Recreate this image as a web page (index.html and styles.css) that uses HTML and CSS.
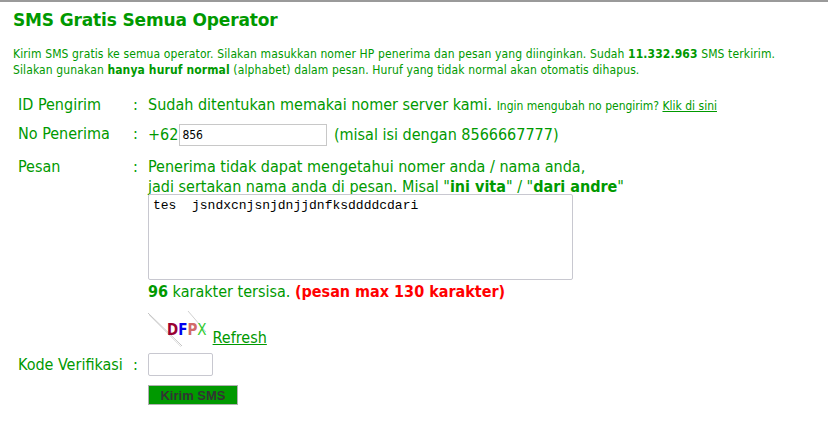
FILE: index.html
```html
<!DOCTYPE html>
<html lang="id">
  <head>
    <meta charset="utf-8" />
    <title>SMS Gratis Semua Operator</title>
    <link rel="stylesheet" href="styles.css">
  </head>
  <body>
    <div class="page">
      <h1 class="title">SMS Gratis Semua Operator</h1>
      <p class="intro">
        Kirim SMS gratis ke semua operator. Silakan masukkan nomer HP penerima dan pesan yang diinginkan. Sudah <b>11.332.963</b> SMS terkirim.<br />
        Silakan gunakan <b>hanya huruf normal</b> (alphabet) dalam pesan. Huruf yang tidak normal akan otomatis dihapus.
      </p>
      <form class="sms-form" onsubmit="return false">
        <table class="form-table">
          <tr class="row-id">
            <td class="label">ID Pengirim</td>
            <td class="colon">:</td>
            <td class="value">Sudah ditentukan memakai nomer server kami. <span class="small">Ingin mengubah no pengirim? <a href="#">Klik di sini</a></span></td>
          </tr>
          <tr class="row-no">
            <td class="label">No Penerima</td>
            <td class="colon">:</td>
            <td class="value">+62<input class="phone" type="text" value="856" /> (misal isi dengan 8566667777)</td>
          </tr>
          <tr class="row-pesan">
            <td class="label">Pesan</td>
            <td class="colon">:</td>
            <td class="value">
              Penerima tidak dapat mengetahui nomer anda / nama anda,<br />
              jadi sertakan nama anda di pesan. Misal "<b>ini vita</b>" / "<b>dari andre</b>"<br />
              <textarea class="message">tes  jsndxcnjsnjdnjjdnfksddddcdari</textarea><br />
              <b>96</b> karakter tersisa. <b class="warn">(pesan max 130 karakter)</b>
            </td>
          </tr>
          <tr class="row-captcha">
            <td></td>
            <td></td>
            <td class="value">
              <span class="captcha">
                <svg class="captcha-noise" width="60" height="36" viewBox="0 0 60 36">
                  <line x1="0" y1="2" x2="34" y2="35" stroke="#c4c4c4" stroke-width="1" />
                  <line x1="1" y1="4" x2="33" y2="36" stroke="#e4e4e4" stroke-width="1" />
                  <line x1="40" y1="0" x2="58" y2="21" stroke="#d0d0d0" stroke-width="1" />
                </svg>
                <span class="letters"><span class="c1">D</span><span class="c2">F</span><span class="c3">P</span><span class="c4">X</span></span>
              </span>
              <a class="refresh" href="#">Refresh</a>
            </td>
          </tr>
          <tr class="row-kode">
            <td class="label">Kode Verifikasi</td>
            <td class="colon">:</td>
            <td class="value"><input class="kode" type="text" /></td>
          </tr>
          <tr class="row-submit">
            <td></td>
            <td></td>
            <td class="value"><button class="submit" type="submit">Kirim SMS</button></td>
          </tr>
        </table>
      </form>
    </div>
  </body>
</html>
```

FILE: styles.css
```css
html,
body {
  margin: 0;
  background: #fff;
}
body {
  border-top: 2px solid #9a9a9a;
  font-family: "DejaVu Sans Condensed", "DejaVu Sans", sans-serif;
  color: #009900;
}
.page {
  padding: 7px 0 0 13px;
}
.title {
  margin: 0;
  font-family: "DejaVu Sans", sans-serif;
  font-size: 17px;
  font-weight: bold;
  line-height: 22px;
  letter-spacing: -0.15px;
}
.intro {
  margin: 15px 0 0 0;
  font-size: 12px;
  line-height: 16px;
  letter-spacing: 0.12px;
}
.form-table {
  margin: 14px 0 0 1px;
  border-collapse: collapse;
  font-size: 16px;
}
.form-table td {
  padding: 0;
  vertical-align: top;
}
.label {
  width: 115px;
  padding-left: 4px !important;
  white-space: nowrap;
}
.colon {
  width: 15px;
}
.row-id td {
  padding-top: 3px;
  height: 25px;
}
.row-no td {
  padding-top: 4px;
  height: 27px;
}
.row-pesan td {
  padding-top: 6px;
  line-height: 20px;
}
.small {
  font-size: 12px;
}
a {
  color: #009900;
}
.phone {
  box-sizing: border-box;
  width: 148px;
  height: 22px;
  margin: 0 2px 0 1px;
  padding: 1px 2px;
  border: 1px solid #c8c8c8;
  font-family: "DejaVu Sans Condensed", sans-serif;
  font-size: 12px;
  color: #000;
  vertical-align: 1px;
}
.message {
  box-sizing: border-box;
  width: 425px;
  height: 86px;
  margin: -3px 0 2px 0;
  padding: 3px 4px;
  border: 1px solid #c8c8d0;
  border-radius: 2px;
  resize: none;
  font-family: "Liberation Mono", monospace;
  font-size: 13px;
  line-height: 15px;
  color: #000;
  vertical-align: top;
}
.warn {
  color: #ff0000;
}
.row-captcha td {
  padding-top: 9px;
  height: 38px;
}
.captcha {
  position: relative;
  display: inline-block;
  overflow: hidden;
  width: 60px;
  height: 36px;
  margin-bottom: -4px;
}
.captcha-noise {
  position: absolute;
  left: 0;
  top: 0;
}
.letters {
  position: absolute;
  left: 19px;
  top: 11px;
  font-family: "DejaVu Sans Condensed", sans-serif;
  font-size: 15px;
  line-height: 16px;
}
.c1 {
  color: #990033;
  font-weight: bold;
}
.c2 {
  color: #0000ee;
  font-weight: bold;
}
.c3 {
  color: #d26a6a;
  font-weight: bold;
}
.c4 {
  color: #33cc33;
}
.row-kode td {
  vertical-align: middle;
  height: 30px;
}
.kode {
  box-sizing: border-box;
  width: 65px;
  height: 23px;
  margin: 0;
  border: 1px solid #c8c8d0;
  border-radius: 2px;
  vertical-align: middle;
}
.submit {
  box-sizing: border-box;
  width: 90px;
  height: 20px;
  margin-top: 6px;
  padding: 0;
  border: 1px solid #b0b0b0;
  background: #009900;
  color: #333;
  font-family: "Liberation Sans", Arial, sans-serif;
  font-size: 13px;
  font-weight: bold;
}
```
